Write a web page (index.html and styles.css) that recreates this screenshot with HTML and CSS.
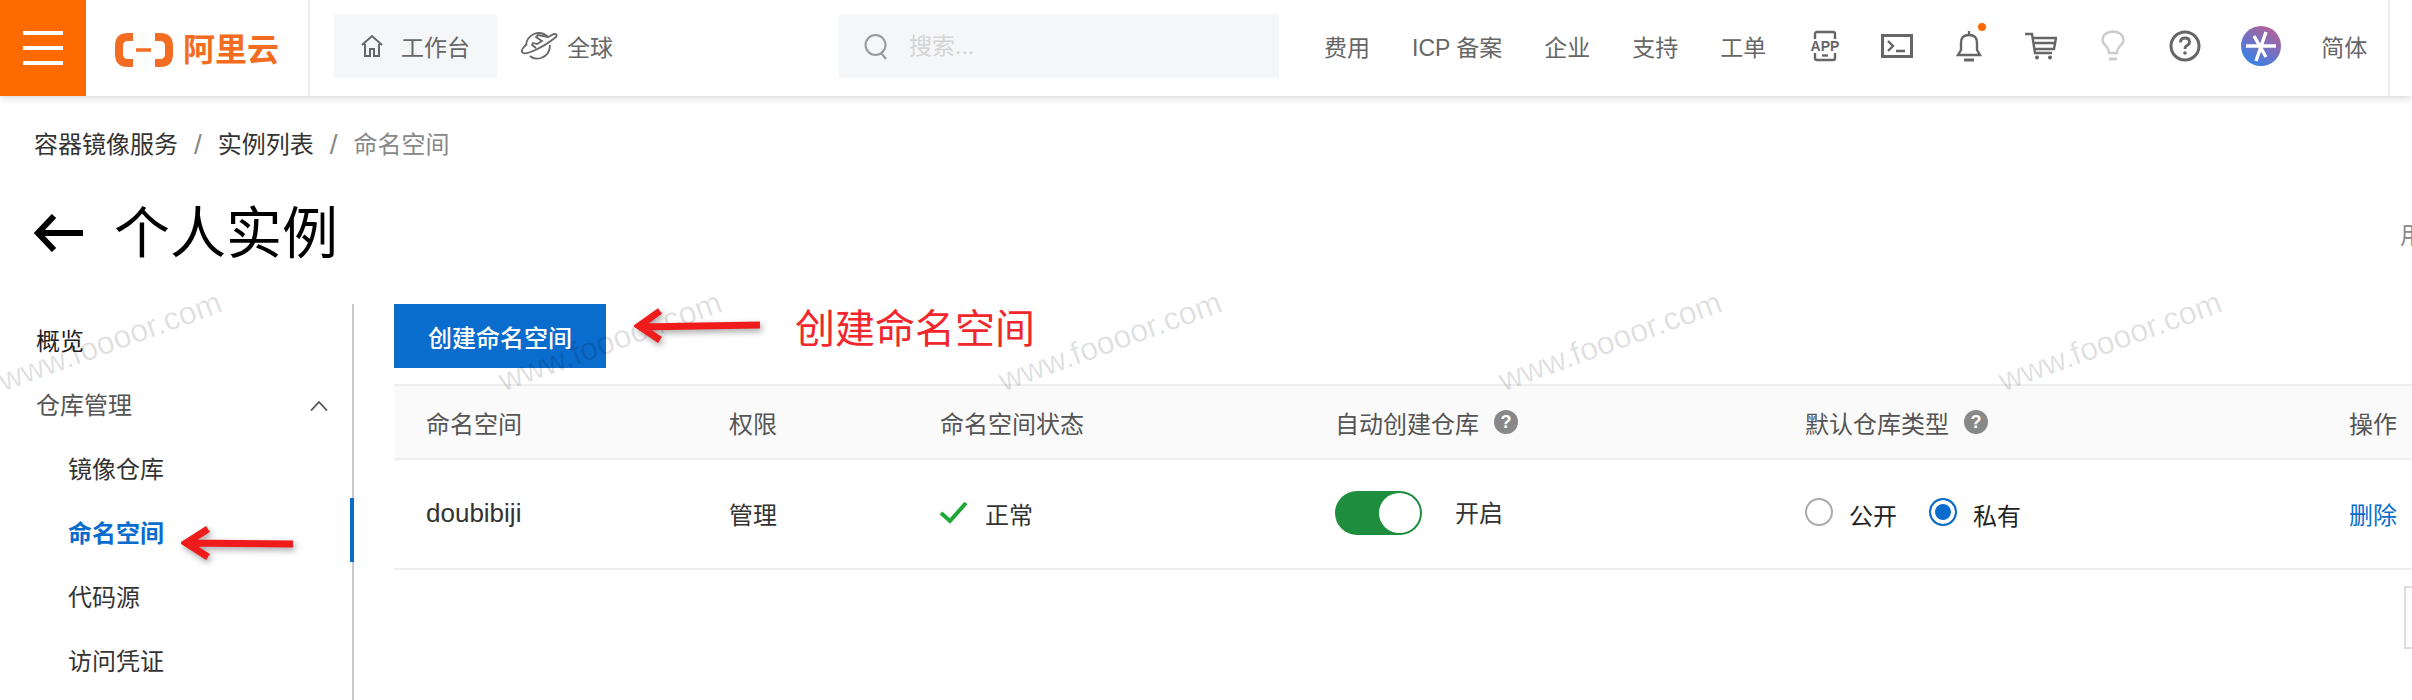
FILE: index.html
```html
<!DOCTYPE html>
<html>
<head>
    <meta charset="UTF-8">
    <title>命名空间 - 容器镜像服务</title>
    <link rel="stylesheet" href="styles.css">
</head>
<body>
    <header class="topbar">
        <a class="menu-btn"><span></span><span></span><span></span></a>
        <div class="logo">
            <svg width="58" height="34" viewBox="0 0 58 34" fill="none" stroke="#f26c22" stroke-width="8">
                <path d="M18 4H13Q4 4 4 13V21Q4 30 13 30H18"/>
                <path d="M40 4H45Q54 4 54 13V21Q54 30 45 30H40"/>
                <path d="M21 17H36" stroke-width="3.500"/>
            </svg>
            <span class="logo-text">阿里云</span>
        </div>
        <a class="workbench">
            <svg width="22" height="24" viewBox="0 0 22 24" fill="none" stroke="#666" stroke-width="2">
                <path d="M1 11 11 2l10 9M4 10v12h5v-7h4v7h5V10"/>
            </svg>
            <span>工作台</span>
        </a>
        <a class="region">
            <svg width="38" height="30" viewBox="0 0 38 30" fill="none" stroke="#666" stroke-width="1.800">
                <path d="M27 6Q21 0 13 3Q6 6 5 14"/>
                <path d="M6 13Q0 18 1 21Q3 24 12 20Q24 15 35 6Q37 3 33 3L27 6L17 4L15 6L21 10L16 13L12 12L11 14L15 17"/>
                <path d="M29 14Q29 24 20 27Q13 29 9 25"/>
            </svg>
            <span>全球</span>
        </a>
        <div class="search">
            <svg width="24" height="28" viewBox="0 0 24 28" fill="none" stroke="#999" stroke-width="2">
                <circle cx="11.500" cy="13" r="10"/>
                <path d="M17 21l5 6"/>
            </svg>
            <input type="text" placeholder="搜索...">
        </div>
        <nav class="top-nav">
            <a class="nav-text">费用</a>
            <a class="nav-text">ICP 备案</a>
            <a class="nav-text">企业</a>
            <a class="nav-text">支持</a>
            <a class="nav-text nav-last">工单</a>
            <a class="nav-icon">
                <svg width="32" height="32" viewBox="0 0 32 32" fill="none" stroke="#666" stroke-width="2.400">
                    <path d="M6 9V4Q6 2 8 2H24Q26 2 26 4V9M6 23V28Q6 30 8 30H24Q26 30 26 28V23"/>
                    <path d="M13 25.500H19"/>
                    <text class="app-text" x="16" y="21" text-anchor="middle">APP</text>
                </svg>
            </a>
            <a class="nav-icon">
                <svg width="32" height="24" viewBox="0 0 32 24" fill="none" stroke="#666" stroke-width="3">
                    <rect x="1.500" y="1.500" width="29" height="21"/>
                    <path d="M7 7l5 5-5 5M15 17h9" stroke-width="2.400"/>
                </svg>
            </a>
            <a class="nav-icon bell">
                <svg width="26" height="32" viewBox="0 0 26 32" fill="none" stroke="#666" stroke-width="2.400">
                    <path d="M13 1v4M2 25H24L21 20V13Q21 5 13 5Q5 5 5 13V20Z"/>
                    <path d="M8 30H18" stroke-width="3"/>
                </svg>
                <i class="dot"></i>
            </a>
            <a class="nav-icon">
                <svg width="32" height="28" viewBox="0 0 32 28" fill="none" stroke="#666" stroke-width="2.400">
                    <path d="M0 2H7L10 21H27"/>
                    <path d="M8 6H31L29 17H10M9 11H30"/>
                    <circle cx="12" cy="25.500" r="2" fill="#666" stroke="none"/>
                    <circle cx="25" cy="25.500" r="2" fill="#666" stroke="none"/>
                </svg>
            </a>
            <a class="nav-icon">
                <svg width="24" height="32" viewBox="0 0 24 32" fill="none" stroke="#ccc" stroke-width="2.400">
                    <path d="M8 23Q8 19 5 16Q1.500 13 1.500 10Q2 2 12 1.500Q22 2 22.500 10Q22.500 13 19 16Q16 19 16 23Z"/>
                    <path d="M8 29H16" stroke-width="3"/>
                </svg>
            </a>
            <a class="nav-icon">
                <svg width="32" height="32" viewBox="0 0 32 32" fill="none" stroke="#666" stroke-width="3">
                    <circle cx="16" cy="16" r="14"/>
                    <path d="M11.500 12.500Q11.500 8 16 8Q20.500 8 20.500 12Q20.500 14.500 18 15.500Q16 16.500 16 19" stroke-width="2.800"/>
                    <circle cx="16" cy="23" r="1.800" fill="#666" stroke="none"/>
                </svg>
            </a>
            <a class="nav-icon nav-avatar">
                <svg width="40" height="40" viewBox="0 0 40 40">
                    <defs>
                        <linearGradient id="avatarFill" x1="0.200" y1="1" x2="0.800" y2="0">
                            <stop offset="0" stop-color="#2f83ea"/>
                            <stop offset="1" stop-color="#b75f97"/>
                        </linearGradient>
                    </defs>
                    <circle cx="20" cy="20" r="20" fill="url(#avatarFill)"/>
                    <path d="M5 20H35M25 6 15 35M13 10 25 31" stroke="#fff" stroke-width="3.400" fill="none"/>
                </svg>
            </a>
            <a class="nav-text nav-lang">简体</a>
        </nav>
        <div class="topbar-end"></div>
    </header>

    <div class="crumbs">
        <a>容器镜像服务</a>
        <span class="crumb-sep">/</span>
        <a>实例列表</a>
        <span class="crumb-sep">/</span>
        <span class="crumb-now">命名空间</span>
    </div>

    <div class="page-title">
        <svg width="49" height="38" viewBox="0 0 49 38" fill="none" stroke="#000" stroke-width="6">
            <path d="M20 2 4 19l16 17M4 19H49"/>
        </svg>
        <h1>个人实例</h1>
        <span class="guide-link">用户指南</span>
    </div>

    <div class="workspace">
        <aside class="sidebar">
            <a class="side-item side-dark">概览</a>
            <a class="side-item side-group">
                仓库管理
                <svg width="18" height="10" viewBox="0 0 18 10" fill="none" stroke="#555" stroke-width="1.800">
                    <path d="M1 9.500 9 1l8 8.500"/>
                </svg>
            </a>
            <a class="side-item side-sub">镜像仓库</a>
            <a class="side-item side-sub side-active">命名空间</a>
            <a class="side-item side-sub">代码源</a>
            <a class="side-item side-sub">访问凭证</a>
        </aside>

        <main class="content">
            <button class="create-btn">创建命名空间</button>
            <div class="table">
                <div class="table-row table-head">
                    <div>命名空间</div>
                    <div>权限</div>
                    <div>命名空间状态</div>
                    <div class="head-help">自动创建仓库 <i class="help-mark">?</i></div>
                    <div class="head-help">默认仓库类型 <i class="help-mark">?</i></div>
                    <div>操作</div>
                </div>
                <div class="table-row table-body">
                    <div class="name-cell">doubibiji</div>
                    <div>管理</div>
                    <div class="status-cell">
                        <svg width="28" height="22" viewBox="0 0 28 22" fill="none" stroke="#1fa838" stroke-width="4">
                            <path d="M1 11l9 8L26 1"/>
                        </svg>
                        正常
                    </div>
                    <div class="switch-cell">
                        <span class="switch"><i></i></span>
                        <span class="switch-label">开启</span>
                    </div>
                    <div class="radio-cell">
                        <span class="radio"></span><span class="radio-label">公开</span>
                        <span class="radio radio-on"></span><span class="radio-label">私有</span>
                    </div>
                    <div><a class="link">删除</a></div>
                </div>
            </div>
        </main>
    </div>

    <div class="float-box"></div>

    <!-- 截图上的标注和水印 -->
    <div class="watermarks">
        <span>www.foooor.com</span>
        <span>www.foooor.com</span>
        <span>www.foooor.com</span>
        <span>www.foooor.com</span>
        <span>www.foooor.com</span>
    </div>
    <svg class="mark mark-btn" width="132" height="36" viewBox="0 0 132 36" fill="none" stroke="#f01c1c" stroke-width="7">
        <path d="M26 3 5 18l21 14M5 19 126 17"/>
    </svg>
    <svg class="mark mark-side" width="118" height="36" viewBox="0 0 118 36" fill="none" stroke="#f01c1c" stroke-width="7">
        <path d="M27 3 5 17l22 14M5 17 112 18"/>
    </svg>
    <div class="mark-text">创建命名空间</div>
</body>
</html>
```

FILE: styles.css
```css
body {
    margin: 0;
    width: 2412px;
    height: 700px;
    overflow: hidden;
    position: relative;
    background: #fff;
    color: #333;
    font-family: "Liberation Sans", "Noto Sans CJK SC", sans-serif;
    font-size: 24px;
}

/* 顶部导航 */
.topbar {
    height: 96px;
    padding-bottom: 4px;
    box-sizing: border-box;
    display: flex;
    align-items: center;
    background: #fff;
    box-shadow: 0 2px 8px rgba(0,0,0,0.16);
    color: #666;
    font-size: 23px;
}
.menu-btn {
    align-self: flex-start;
    width: 86px;
    height: 96px;
    background: #ff6a00;
    display: flex;
    flex-direction: column;
    align-items: center;
    justify-content: center;
    gap: 11px;
}
.menu-btn span {
    width: 40px;
    height: 4px;
    background: #fff;
}
.logo {
    align-self: flex-start;
    width: 224px;
    height: 96px;
    padding: 4px 0 0 29px;
    box-sizing: border-box;
    display: flex;
    align-items: center;
    gap: 10px;
    border-right: 2px solid #eee;
}
.logo-text {
    color: #f26c22;
    font-size: 32px;
    font-weight: 700;
    line-height: 34px;
}
.workbench {
    width: 163px;
    height: 64px;
    margin-left: 24px;
    padding-left: 27px;
    box-sizing: border-box;
    display: flex;
    align-items: center;
    gap: 18px;
    background: #f5f6f8;
    border-radius: 2px;
}
.region {
    margin-left: 24px;
    display: flex;
    align-items: center;
    gap: 8px;
}
.search {
    width: 440px;
    height: 64px;
    margin-left: 226px;
    padding-left: 25px;
    box-sizing: border-box;
    display: flex;
    align-items: center;
    gap: 21px;
    background: #f5f6f8;
}
.search input {
    border: none;
    outline: none;
    background: transparent;
    font-family: inherit;
    font-size: 23px;
    width: 300px;
    padding: 0;
}
.search input::placeholder {
    color: #d4d4d4;
}
.top-nav {
    margin-left: 24px;
    display: flex;
    align-items: center;
}
.nav-text {
    padding: 0 21px;
    white-space: nowrap;
}
.nav-last {
    padding-right: 23px;
}
.nav-icon {
    width: 72px;
    display: flex;
    justify-content: center;
    align-items: center;
    position: relative;
}
.nav-avatar {
    margin-left: 4px;
}
.nav-lang {
    margin-left: 24px;
    padding: 0;
}
.app-text {
    font-size: 14px;
    font-weight: 700;
    fill: #666;
    stroke: none;
}
.bell .dot {
    position: absolute;
    top: -7px;
    left: 45px;
    width: 8px;
    height: 8px;
    border-radius: 50%;
    background: #ff6a00;
}
.topbar-end {
    align-self: flex-start;
    height: 96px;
    margin-left: 21px;
    border-left: 2px solid #eee;
}

/* 面包屑 */
.crumbs {
    padding: 32px 0 0 34px;
    height: 34px;
    line-height: 34px;
    display: flex;
    gap: 16px;
}
.crumb-sep, .crumb-now {
    color: #888;
}
.crumb-sep {
    font-size: 28px;
}

/* 标题 */
.page-title {
    margin-top: 39px;
    height: 64px;
    padding-left: 34px;
    display: flex;
    align-items: center;
}
.page-title h1 {
    margin: 2px 0 0 31px;
    font-size: 56px;
    font-weight: 400;
    color: #000;
    line-height: 64px;
}
.guide-link {
    margin-left: auto;
    width: 12px;
    overflow: hidden;
    white-space: nowrap;
    color: #888;
}

/* 左侧菜单 + 内容 */
.workspace {
    margin-top: 39px;
    display: flex;
    height: 396px;
}
.sidebar {
    width: 354px;
    padding-top: 6px;
    box-sizing: border-box;
    border-right: 2px solid #c8c8c8;
}
.side-item {
    height: 64px;
    line-height: 64px;
    display: block;
    padding-left: 36px;
    position: relative;
}
.side-dark {
    color: #222;
}
.side-group {
    color: #555;
    display: flex;
    align-items: center;
    justify-content: space-between;
    padding-right: 24px;
}
.side-sub {
    padding-left: 68px;
}
.side-active {
    color: #0a6ccc;
    font-weight: 700;
}
.side-active::after {
    content: "";
    position: absolute;
    right: -2px;
    top: -4px;
    width: 4px;
    height: 64px;
    background: #0a6ccc;
}
.content {
    flex: 1;
    margin-left: 40px;
}
.create-btn {
    display: block;
    width: 212px;
    height: 64px;
    padding: 0;
    border: none;
    background: #0a6ccc;
    color: #fff;
    font-family: inherit;
    font-size: 24px;
    font-weight: 500;
}

/* 表格 */
.table {
    margin-top: 16px;
}
.table-row {
    display: grid;
    grid-template-columns: 303px 211px 395px 470px 544px 95px;
    align-items: center;
    border-bottom: 2px solid #eee;
}
.table-row > div {
    padding-left: 32px;
}
.table-head {
    height: 72px;
    background: #fafafa;
    border-top: 2px solid #eee;
    color: #555;
}
.table-body {
    height: 106px;
    padding-bottom: 2px;
}
.name-cell {
    font-size: 26px;
}
.head-help {
    display: flex;
    align-items: center;
    gap: 15px;
}
.help-mark {
    width: 24px;
    height: 24px;
    border-radius: 50%;
    background: #888;
    color: #fff;
    font-size: 18px;
    font-weight: 700;
    font-style: normal;
    line-height: 24px;
    text-align: center;
}
.status-cell {
    display: flex;
    align-items: center;
    gap: 17px;
}
.switch-cell {
    display: flex;
    align-items: center;
    gap: 33px;
}
.switch-label {
    margin-bottom: 3px;
}
.switch {
    width: 87px;
    height: 44px;
    padding: 2px;
    box-sizing: border-box;
    border-radius: 22px;
    background: #1e8e3e;
    display: flex;
    justify-content: flex-end;
}
.switch i {
    width: 41px;
    height: 40px;
    border-radius: 50%;
    background: #fff;
}
.radio-cell {
    display: flex;
    align-items: center;
}
.radio {
    width: 28px;
    height: 28px;
    box-sizing: border-box;
    border: 2px solid #aaa;
    border-radius: 50%;
    margin-top: -3px;
}
.radio-on {
    border-color: #0a6ccc;
    background: #0a6ccc;
    box-shadow: inset 0 0 0 4px #fff;
}
.radio-label {
    margin: 3px 32px 0 16px;
    color: #222;
}
.link {
    color: #0a6ccc;
}
.float-box {
    position: absolute;
    left: 2404px;
    top: 586px;
    width: 20px;
    height: 63px;
    box-sizing: border-box;
    border: 2px solid #ddd;
    background: #fdfdfd;
}

/* 标注 */
.watermarks {
    position: absolute;
    left: -140px;
    top: 321px;
    display: flex;
    pointer-events: none;
}
.watermarks span {
    width: 500px;
    height: 40px;
    line-height: 40px;
    text-align: center;
    font-size: 32px;
    color: rgba(0,0,0,0.12);
    transform: rotate(-20deg);
    white-space: nowrap;
}
.mark {
    position: absolute;
    filter: drop-shadow(2px 3px 3px rgba(0,0,0,0.35));
}
.mark-btn {
    left: 634px;
    top: 308px;
}
.mark-side {
    left: 181px;
    top: 526px;
}
.mark-text {
    position: absolute;
    left: 795px;
    top: 302px;
    font-size: 40px;
    line-height: 54px;
    color: #f0282d;
}
```
